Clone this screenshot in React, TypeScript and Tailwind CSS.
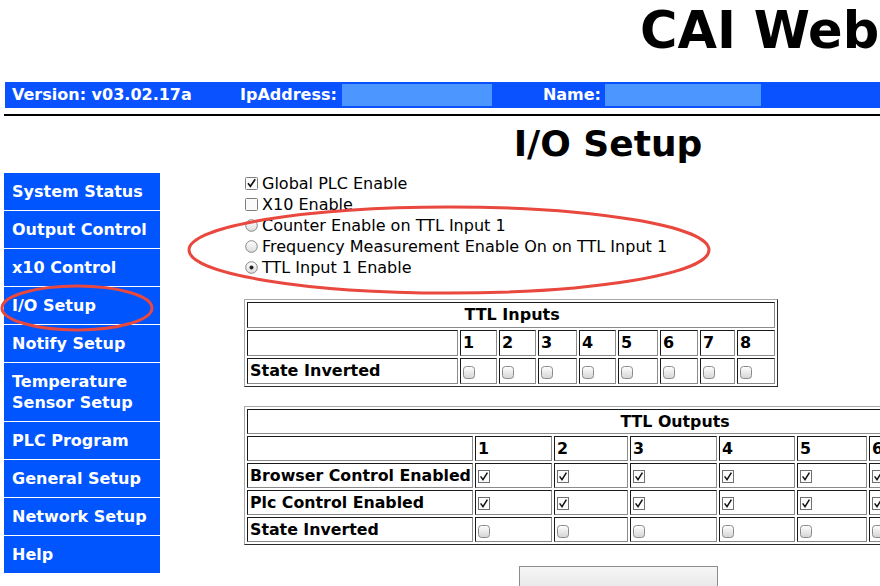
import React from 'react';

const menu = [
  'System Status',
  'Output Control',
  'x10 Control',
  'I/O Setup',
  'Notify Setup',
  'Temperature Sensor Setup',
  'PLC Program',
  'General Setup',
  'Network Setup',
  'Help',
];

const inCols = [37, 37, 39, 37, 40, 38, 35, 38];
const outCols = [77, 74, 87, 76, 70, 76, 76, 76];

// small mac-style checkbox used in the option list
function ListCheck({ checked }: { checked?: boolean }) {
  return (
    <svg width="13" height="13" viewBox="0 0 13 13" className="shrink-0">
      <rect x="0.5" y="0.5" width="12" height="12" rx="1" fill="#fafafa" stroke="#7d7d7d" />
      {checked && <path d="M3 6.2 L5.4 9.3 L10.2 2.2" fill="none" stroke="#111" strokeWidth="1.6" />}
    </svg>
  );
}

function Radio({ checked }: { checked?: boolean }) {
  return (
    <svg width="13" height="13" viewBox="0 0 13 13" className="shrink-0">
      <defs>
        <linearGradient id="rg" x1="0" y1="0" x2="0" y2="1">
          <stop offset="0" stopColor="#ffffff" />
          <stop offset="1" stopColor="#dcdcdc" />
        </linearGradient>
      </defs>
      <circle cx="6.5" cy="6.5" r="5.8" fill="url(#rg)" stroke="#858585" />
      {checked && <circle cx="6.5" cy="6.5" r="2" fill="#222" />}
    </svg>
  );
}

// checkbox inside the tables
function CellCheck({ checked }: { checked?: boolean }) {
  if (checked) {
    return (
      <svg width="12" height="13" viewBox="0 0 12 13" className="block">
        <rect x="0.5" y="0.5" width="11" height="12" fill="#fdfdfd" stroke="#6f6f6f" />
        <path d="M2.6 6.4 L5 9.6 L9.4 2.6" fill="none" stroke="#111" strokeWidth="1.5" />
      </svg>
    );
  }
  return (
    <svg width="12" height="13" viewBox="0 0 12 13" className="block">
      <defs>
        <linearGradient id="cg" x1="0" y1="0" x2="0" y2="1">
          <stop offset="0" stopColor="#ffffff" />
          <stop offset="1" stopColor="#d4d4d4" />
        </linearGradient>
      </defs>
      <rect x="0.5" y="0.5" width="11" height="12" rx="3" fill="url(#cg)" stroke="#8a8a8a" />
    </svg>
  );
}

const cell =
  'h-[26px] p-0 pl-[2px] leading-[20px] border border-t-[#1a1a1a] border-l-[#1a1a1a] border-r-[#8a8a8a] border-b-[#8a8a8a] align-middle text-left';
const ocell =
  'h-[25px] p-0 pl-[2px] leading-[20px] border border-t-[#1a1a1a] border-l-[#1a1a1a] border-r-[#8a8a8a] border-b-[#8a8a8a] align-middle text-left';

export default function App() {
  return (
    <div className="relative w-[880px] h-[586px] overflow-hidden bg-white text-black font-['DejaVu_Sans',Verdana,sans-serif]">
      <div className="w-[1220px]">
        {/* top title */}
        <div className="h-[82px] pl-[640px] pt-[6px]">
          <div className="text-[51px] leading-[50px] font-bold whitespace-nowrap">CAI Web</div>
        </div>

        {/* info bar */}
        <div className="ml-[5px] h-[26px] bg-[#0a52ff] flex items-center pl-[7px] text-white font-bold text-[16px] whitespace-nowrap">
          <span className="w-[228px]">Version: v03.02.17a</span>
          <span>IpAddress:</span>
          <span className="ml-[5px] w-[150px] h-[22px] bg-[#4c96ff]" />
          <span className="ml-[51px]">Name:</span>
          <span className="ml-[4px] w-[156px] h-[22px] bg-[#4c96ff]" />
        </div>

        <div className="mt-[6px] ml-[4px] h-[2px] bg-black" />

        <div className="mt-[10px] ml-[160px] w-[896px] text-center text-[36px] leading-[36px] font-bold">I/O Setup</div>

        <div className="mt-[11px] flex items-start">
          {/* side menu */}
          <nav className="ml-[4px] w-[156px] flex flex-col gap-px">
            {menu.map((m) => (
              <div key={m} className="bg-[#0055ff] text-white font-bold text-[16px] leading-[21px] px-[8px] py-[8px]">
                {m}
              </div>
            ))}
          </nav>

          <main className="ml-[84px] flex flex-col items-start">
            <div className="text-[16px] leading-[21px] whitespace-nowrap">
              <div className="flex items-center gap-[4px] pl-px">
                <ListCheck checked />
                <span>Global PLC Enable</span>
              </div>
              <div className="flex items-center gap-[4px] pl-px">
                <ListCheck />
                <span>X10 Enable</span>
              </div>
              <div className="flex items-center gap-[4px] pl-px">
                <Radio />
                <span>Counter Enable on TTL Input 1</span>
              </div>
              <div className="flex items-center gap-[4px] pl-px">
                <Radio />
                <span>Frequency Measurement Enable On on TTL Input 1</span>
              </div>
              <div className="flex items-center gap-[4px] pl-px">
                <Radio checked />
                <span>TTL Input 1 Enable</span>
              </div>
            </div>

            {/* TTL inputs */}
            <table className="mt-[21px] table-fixed border-separate border-spacing-[2px] border border-t-[#a8a8a8] border-l-[#a8a8a8] border-r-[#2a2a2a] border-b-[#2a2a2a] w-[534px] text-[16px] font-bold whitespace-nowrap">
              <colgroup>
                <col className="w-[211px]" />
                {inCols.map((w, i) => (
                  <col key={i} style={{ width: w }} />
                ))}
              </colgroup>
              <tbody>
                <tr>
                  <td colSpan={9} className={cell}>
                    <div className="text-center">TTL Inputs</div>
                  </td>
                </tr>
                <tr>
                  <td className={cell} />
                  {inCols.map((_, i) => (
                    <td key={i} className={cell}>
                      {i + 1}
                    </td>
                  ))}
                </tr>
                <tr>
                  <td className={cell}>State Inverted</td>
                  {inCols.map((_, i) => (
                    <td key={i} className={cell}>
                      <div className="pt-[3px]">
                        <CellCheck />
                      </div>
                    </td>
                  ))}
                </tr>
              </tbody>
            </table>

            {/* TTL outputs */}
            <table className="mt-[19px] table-fixed border-separate border-spacing-[2px] border border-t-[#a8a8a8] border-l-[#a8a8a8] border-r-[#2a2a2a] border-b-[#2a2a2a] w-[860px] text-[15.8px] font-bold whitespace-nowrap">
              <colgroup>
                <col className="w-[226px]" />
                {outCols.map((w, i) => (
                  <col key={i} style={{ width: w }} />
                ))}
              </colgroup>
              <tbody>
                <tr>
                  <td colSpan={9} className={ocell}>
                    <div className="text-center">TTL Outputs</div>
                  </td>
                </tr>
                <tr>
                  <td className={ocell} />
                  {outCols.map((_, i) => (
                    <td key={i} className={ocell}>
                      {i + 1}
                    </td>
                  ))}
                </tr>
                <tr>
                  <td className={ocell}>Browser Control Enabled</td>
                  {outCols.map((_, i) => (
                    <td key={i} className={ocell}>
                      <div className="pt-[2px]">
                        <CellCheck checked />
                      </div>
                    </td>
                  ))}
                </tr>
                <tr>
                  <td className={ocell}>Plc Control Enabled</td>
                  {outCols.map((_, i) => (
                    <td key={i} className={ocell}>
                      <div className="pt-[2px]">
                        <CellCheck checked />
                      </div>
                    </td>
                  ))}
                </tr>
                <tr>
                  <td className={ocell}>State Inverted</td>
                  {outCols.map((_, i) => (
                    <td key={i} className={ocell}>
                      <div className="pt-[3px]">
                        <CellCheck />
                      </div>
                    </td>
                  ))}
                </tr>
              </tbody>
            </table>

            <button className="mt-[21px] ml-[275px] w-[199px] h-[30px] border border-[#8c8c8c] bg-gradient-to-b from-[#f6f6f6] to-[#e4e4e4]" />
          </main>
        </div>
      </div>

      {/* red annotation rings */}
      <svg className="absolute inset-0 pointer-events-none" width="880" height="586" viewBox="0 0 880 586">
        <ellipse cx="449" cy="250" rx="260" ry="43" fill="none" stroke="#e8483e" strokeWidth="3" />
        <ellipse cx="77" cy="308" rx="75" ry="22" fill="none" stroke="#e8483e" strokeWidth="3" />
      </svg>
    </div>
  );
}
